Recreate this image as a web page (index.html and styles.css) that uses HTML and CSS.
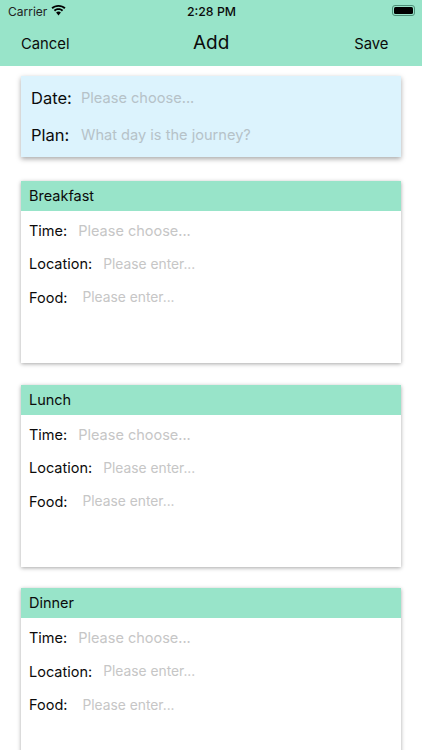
FILE: index.html
```html
<!DOCTYPE html>
<html lang="en">
<head>
<meta charset="utf-8">
<title>Add</title>
<link rel="stylesheet" href="styles.css">
</head>
<body>
<div class="app">
  <header class="top">
    <div class="status">
      <div class="status-left">
        <span>Carrier</span>
        <svg class="wifi" viewBox="0 0 16 12" width="15" height="11"><path d="M8 1.900c2.400 0 4.600.9 6.200 2.500l1.500-1.600C13.700.9 11 0 8 0S2.300.9.300 2.800l1.500 1.600C3.400 2.800 5.600 1.900 8 1.900z"/><path d="M8 5.500c1.400 0 2.700.5 3.700 1.500l1.400-1.500C11.800 4.200 10 3.500 8 3.500s-3.800.7-5.100 2l1.400 1.500c1-1 2.300-1.500 3.700-1.500z"/><path d="M8 7.200c-1 0-1.900.4-2.600 1L8 11.400l2.600-3.200c-.7-.6-1.600-1-2.600-1z"/></svg>
      </div>
      <span class="clock">2:28 PM</span>
      <div class="battery"><span class="battery-level"></span></div>
    </div>
    <nav class="nav">
      <span class="nav-btn">Cancel</span>
      <span class="nav-title">Add</span>
      <span class="nav-btn">Save</span>
    </nav>
  </header>
  <main class="content">
    <section class="summary">
      <div class="summary-row"><span class="summary-label">Date:</span><span class="summary-hint">Please choose...</span></div>
      <div class="summary-row"><span class="summary-label">Plan:</span><span class="summary-hint">What day is the journey?</span></div>
    </section>
    <section class="meal">
      <h2 class="meal-head">Breakfast</h2>
      <div class="meal-row"><span class="meal-label">Time:</span><span class="hint-choose">Please choose...</span></div>
      <div class="meal-row"><span class="meal-label">Location:</span><span class="hint-enter">Please enter...</span></div>
      <div class="meal-row"><span class="meal-label">Food:</span><span class="hint-enter food">Please enter...</span></div>
    </section>
    <section class="meal">
      <h2 class="meal-head">Lunch</h2>
      <div class="meal-row"><span class="meal-label">Time:</span><span class="hint-choose">Please choose...</span></div>
      <div class="meal-row"><span class="meal-label">Location:</span><span class="hint-enter">Please enter...</span></div>
      <div class="meal-row"><span class="meal-label">Food:</span><span class="hint-enter food">Please enter...</span></div>
    </section>
    <section class="meal">
      <h2 class="meal-head">Dinner</h2>
      <div class="meal-row"><span class="meal-label">Time:</span><span class="hint-choose">Please choose...</span></div>
      <div class="meal-row"><span class="meal-label">Location:</span><span class="hint-enter">Please enter...</span></div>
      <div class="meal-row"><span class="meal-label">Food:</span><span class="hint-enter food">Please enter...</span></div>
    </section>
  </main>
</div>
</body>
</html>
```
FILE: styles.css
```css
* { box-sizing: border-box; }
html, body { margin: 0; height: 100%; }
body { background: #fff; color: #0b0b0b; font-family: Inter, "Liberation Sans", sans-serif; overflow: hidden; }
.app { width: 422px; height: 750px; overflow: hidden; display: flex; flex-direction: column; }
.top { background: #98e4c9; height: 66px; flex: none; }
.status { height: 22px; padding: 0 6px 0 8px; display: grid; grid-template-columns: 1fr auto 1fr; align-items: center; font-size: 12px; }
.status-left { display: flex; align-items: center; gap: 4px; font-size: 12px; color: #222; }
.wifi { display: block; margin-top: -1px; }
.clock { font-weight: 500; font-size: 12.300px; margin-left: -1px; }
.battery { justify-self: end; width: 23px; height: 11px; border: 1px solid #4d8f78; border-radius: 3px; padding: 1px; margin-top: -1px; margin-right: 1px; }
.battery-level { display: block; height: 100%; background: #000; border-radius: 1.500px; }
.nav { height: 43px; display: flex; justify-content: space-between; align-items: center; padding: 0 33.500px 0 21px; position: relative; }
.nav-btn { font-size: 14.800px; }
.nav-title { font-size: 19px; position: absolute; left: 193px; top: 9px; }
.content { padding: 10px 21px 0; display: flex; flex-direction: column; gap: 24px; }
.summary { background: #dcf3fd; height: 81px; padding: 4px 0 0 10px; box-shadow: 0 2px 5px rgba(0,0,0,.35); flex: none; }
.summary-row { height: 36.500px; display: flex; align-items: center; }
.summary-label { font-size: 16.500px; width: 50px; }
.summary-hint { font-size: 14.600px; color: #b6c2c8; }
.meal { background: #fff; height: 182px; box-shadow: 0 1px 4px rgba(0,0,0,.35); flex: none; margin-bottom: -2.300px; }
.meal-head { margin: 0; background: #98e4c9; height: 30px; padding-left: 8px; font-size: 14.500px; font-weight: 400; line-height: 29px; }
.meal-row { height: 33.500px; display: flex; align-items: center; padding-left: 8px; font-size: 14.500px; }
.meal-row:first-of-type { margin-top: 2.700px; }
.meal-label { margin-right: 11px; }
.hint-choose { font-size: 14.500px; color: #c6c6c6; }
.hint-enter { font-size: 13.800px; color: #c6c6c6; }
.food { margin-left: 4px; }
```
